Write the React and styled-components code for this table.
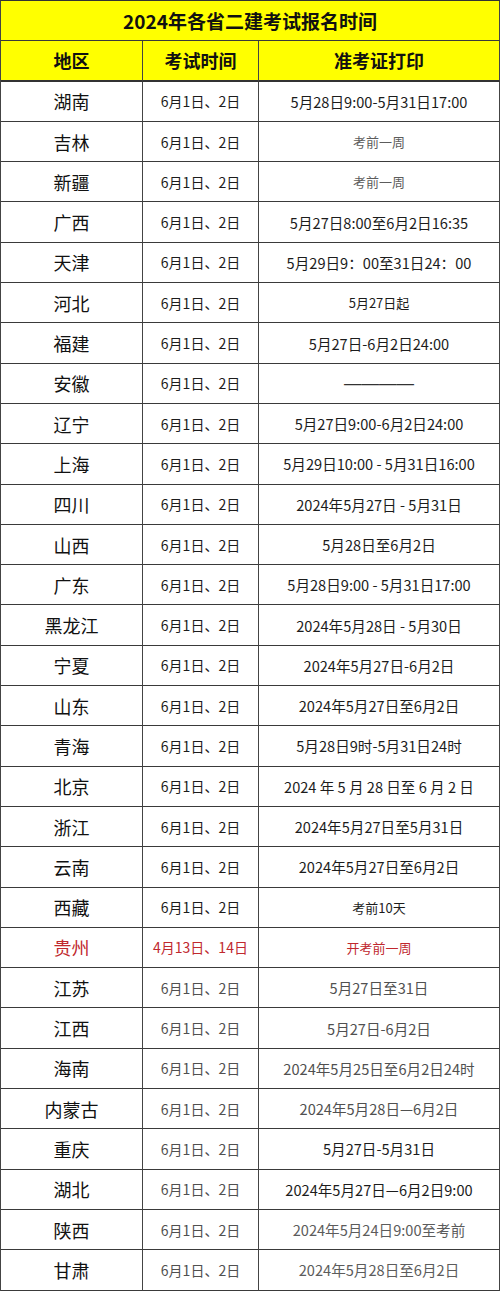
import React from "react"
import styled, { createGlobalStyle } from "styled-components"

const GlobalStyle = createGlobalStyle`
  html, body {
    margin: 0;
    padding: 0;
    background: #ffffff;
  }
  body {
    font-family: "Noto Sans CJK SC", "Noto Sans", sans-serif;
  }
`

const ROW = "40.3px"

const Sheet = styled.div`
  width: 500px;
  box-sizing: border-box;
  display: grid;
  grid-template-columns: 142px 116px 1fr;
  grid-auto-rows: ${ROW};
  border-top: 1px solid #333;
  border-left: 1px solid #444;
`

const Base = styled.div`
  box-sizing: border-box;
  display: flex;
  align-items: center;
  justify-content: center;
  border-right: 1px solid #444;
  border-bottom: 1px solid #3a3a3a;
  white-space: nowrap;
`

const TitleCell = styled(Base)`
  grid-column: 1 / -1;
  background: #ffff00;
  color: #111;
  font-size: 19px;
  font-weight: 700;
`

const HeadCell = styled(Base)`
  background: #ffff00;
  color: #111;
  font-size: 18px;
  font-weight: 700;
  border-bottom: 2px solid #333;
`

const tones = {
  dark: "#1c1c1c",
  gray: "#505050",
  light: "#5c5c5c",
  red: "#c0282e",
}

const RegionCell = styled(Base)`
  font-size: 18px;
  color: ${(p) => (p.$tone === "red" ? tones.red : "#111")};
`

const Cell = styled(Base)`
  font-size: ${(p) => (p.$small ? "13px" : p.$wide ? "14.6px" : "14px")};
  color: ${(p) => tones[p.$tone] || tones.dark};
`

const Dash = styled.span`
  font-family: "Liberation Sans", sans-serif;
  font-size: 17.5px;
  color: #333;
`

const SAME = "6月1日、2日"

const rows = [
  ["湖南", SAME, "5月28日9:00-5月31日17:00"],
  ["吉林", SAME, "考前一周", { small: true, t3: "light" }],
  ["新疆", SAME, "考前一周", { small: true, t3: "light" }],
  ["广西", SAME, "5月27日8:00至6月2日16:35"],
  ["天津", SAME, "5月29日9：00至31日24：00"],
  ["河北", SAME, "5月27日起", { small: true }],
  ["福建", SAME, "5月27日-6月2日24:00"],
  ["安徽", SAME, "dash", { small: true }],
  ["辽宁", SAME, "5月27日9:00-6月2日24:00"],
  ["上海", SAME, "5月29日10:00 - 5月31日16:00"],
  ["四川", SAME, "2024年5月27日 - 5月31日"],
  ["山西", SAME, "5月28日至6月2日"],
  ["广东", SAME, "5月28日9:00 - 5月31日17:00"],
  ["黑龙江", SAME, "2024年5月28日 - 5月30日"],
  ["宁夏", SAME, "2024年5月27日-6月2日"],
  ["山东", SAME, "2024年5月27日至6月2日"],
  ["青海", SAME, "5月28日9时-5月31日24时"],
  ["北京", SAME, "2024 年 5 月 28 日至 6 月 2 日"],
  ["浙江", SAME, "2024年5月27日至5月31日"],
  ["云南", SAME, "2024年5月27日至6月2日"],
  ["西藏", SAME, "考前10天", { small: true }],
  ["贵州", "4月13日、14日", "开考前一周", { red: true, small: true }],
  ["江苏", SAME, "5月27日至31日", { t2: "gray", t3: "gray" }],
  ["江西", SAME, "5月27日-6月2日", { t2: "gray", t3: "gray" }],
  ["海南", SAME, "2024年5月25日至6月2日24时", { t2: "gray", t3: "gray" }],
  ["内蒙古", SAME, "2024年5月28日—6月2日", { t2: "gray", t3: "gray" }],
  ["重庆", SAME, "5月27日-5月31日", { t2: "gray", t3: "dark" }],
  ["湖北", SAME, "2024年5月27日—6月2日9:00", { t2: "gray", t3: "dark" }],
  ["陕西", SAME, "2024年5月24日9:00至考前", { t2: "gray", t3: "light" }],
  ["甘肃", SAME, "2024年5月28日至6月2日", { t2: "gray", t3: "light" }],
]

export default function App() {
  return (
    <>
      <GlobalStyle />
      <Sheet>
        <TitleCell>2024年各省二建考试报名时间</TitleCell>
        <HeadCell>地区</HeadCell>
        <HeadCell>考试时间</HeadCell>
        <HeadCell>准考证打印</HeadCell>
        {rows.map(([region, exam, ticket, opt = {}]) => {
          const red = opt.red ? "red" : null
          return (
            <React.Fragment key={region}>
              <RegionCell $tone={red}>{region}</RegionCell>
              <Cell $tone={red || opt.t2}>{exam}</Cell>
              <Cell $tone={red || opt.t3} $small={opt.small} $wide={!opt.small}>
                {ticket === "dash" ? <Dash>————</Dash> : ticket}
              </Cell>
            </React.Fragment>
          )
        })}
      </Sheet>
    </>
  )
}
